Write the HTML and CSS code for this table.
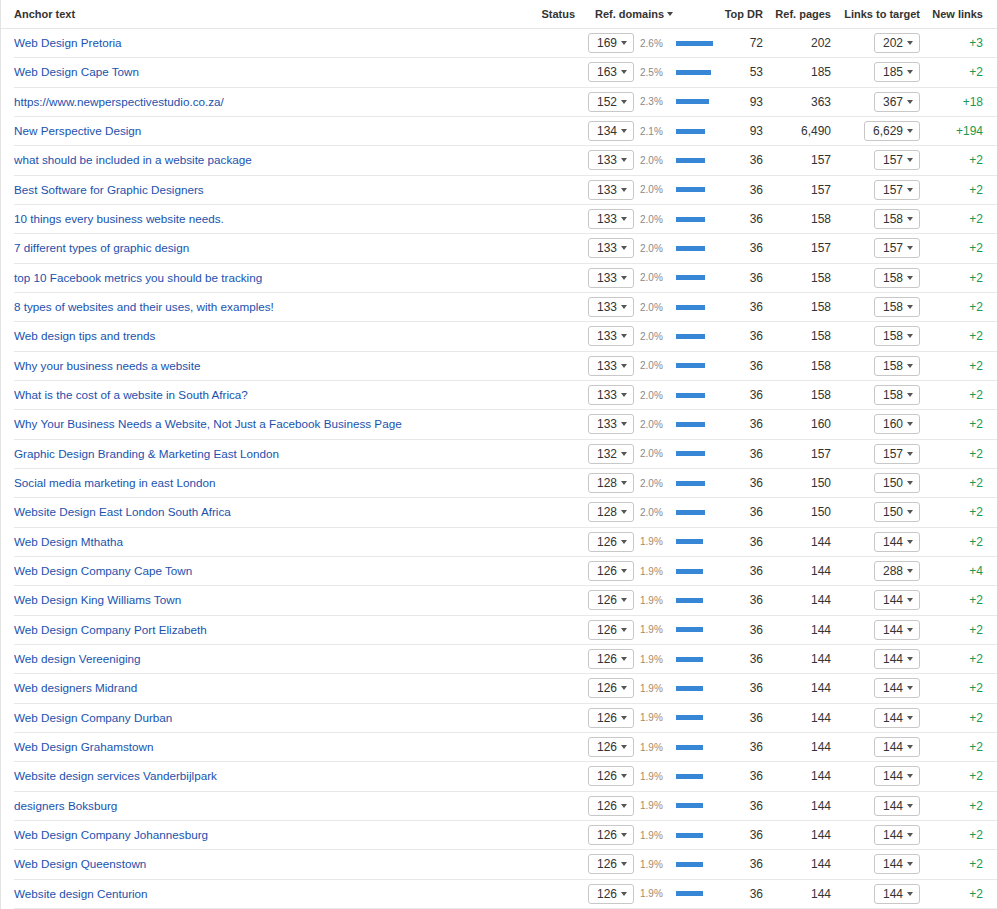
FILE: index.html
```html
<!DOCTYPE html>
<html>
<head>
<meta charset="utf-8">
<link rel="stylesheet" href="styles.css">
</head>
<body>
<div class="table">
  <div class="head">
    <div class="h-anchor">Anchor text</div>
    <div class="h-status">Status</div>
    <div class="h-refdom">Ref. domains <i class="caret"></i></div>
    <div class="h-num">Top DR</div>
    <div class="h-num">Ref. pages</div>
    <div class="h-num">Links to target</div>
    <div class="h-new">New links</div>
  </div>

  <div class="row"><div class="c-anchor"><a class="link" href="#">Web Design Pretoria</a></div><div></div><div class="c-refdom"><span class="dd">169<i class="caret"></i></span><span class="pct">2.6%</span><span class="bar" style="width:37px"></span></div><div class="c-num">72</div><div class="c-num">202</div><div class="c-links"><span class="dd">202<i class="caret"></i></span></div><div class="c-new">+3</div></div>
  <div class="row"><div class="c-anchor"><a class="link" href="#">Web Design Cape Town</a></div><div></div><div class="c-refdom"><span class="dd">163<i class="caret"></i></span><span class="pct">2.5%</span><span class="bar" style="width:35px"></span></div><div class="c-num">53</div><div class="c-num">185</div><div class="c-links"><span class="dd">185<i class="caret"></i></span></div><div class="c-new">+2</div></div>
  <div class="row"><div class="c-anchor"><a class="link" href="#">https://www.newperspectivestudio.co.za/</a></div><div></div><div class="c-refdom"><span class="dd">152<i class="caret"></i></span><span class="pct">2.3%</span><span class="bar" style="width:33px"></span></div><div class="c-num">93</div><div class="c-num">363</div><div class="c-links"><span class="dd">367<i class="caret"></i></span></div><div class="c-new">+18</div></div>
  <div class="row"><div class="c-anchor"><a class="link" href="#">New Perspective Design</a></div><div></div><div class="c-refdom"><span class="dd">134<i class="caret"></i></span><span class="pct">2.1%</span><span class="bar" style="width:29px"></span></div><div class="c-num">93</div><div class="c-num">6,490</div><div class="c-links"><span class="dd">6,629<i class="caret"></i></span></div><div class="c-new">+194</div></div>
  <div class="row"><div class="c-anchor"><a class="link" href="#">what should be included in a website package</a></div><div></div><div class="c-refdom"><span class="dd">133<i class="caret"></i></span><span class="pct">2.0%</span><span class="bar" style="width:29px"></span></div><div class="c-num">36</div><div class="c-num">157</div><div class="c-links"><span class="dd">157<i class="caret"></i></span></div><div class="c-new">+2</div></div>
  <div class="row"><div class="c-anchor"><a class="link" href="#">Best Software for Graphic Designers</a></div><div></div><div class="c-refdom"><span class="dd">133<i class="caret"></i></span><span class="pct">2.0%</span><span class="bar" style="width:29px"></span></div><div class="c-num">36</div><div class="c-num">157</div><div class="c-links"><span class="dd">157<i class="caret"></i></span></div><div class="c-new">+2</div></div>
  <div class="row"><div class="c-anchor"><a class="link" href="#">10 things every business website needs.</a></div><div></div><div class="c-refdom"><span class="dd">133<i class="caret"></i></span><span class="pct">2.0%</span><span class="bar" style="width:29px"></span></div><div class="c-num">36</div><div class="c-num">158</div><div class="c-links"><span class="dd">158<i class="caret"></i></span></div><div class="c-new">+2</div></div>
  <div class="row"><div class="c-anchor"><a class="link" href="#">7 different types of graphic design</a></div><div></div><div class="c-refdom"><span class="dd">133<i class="caret"></i></span><span class="pct">2.0%</span><span class="bar" style="width:29px"></span></div><div class="c-num">36</div><div class="c-num">157</div><div class="c-links"><span class="dd">157<i class="caret"></i></span></div><div class="c-new">+2</div></div>
  <div class="row"><div class="c-anchor"><a class="link" href="#">top 10 Facebook metrics you should be tracking</a></div><div></div><div class="c-refdom"><span class="dd">133<i class="caret"></i></span><span class="pct">2.0%</span><span class="bar" style="width:29px"></span></div><div class="c-num">36</div><div class="c-num">158</div><div class="c-links"><span class="dd">158<i class="caret"></i></span></div><div class="c-new">+2</div></div>
  <div class="row"><div class="c-anchor"><a class="link" href="#">8 types of websites and their uses, with examples!</a></div><div></div><div class="c-refdom"><span class="dd">133<i class="caret"></i></span><span class="pct">2.0%</span><span class="bar" style="width:29px"></span></div><div class="c-num">36</div><div class="c-num">158</div><div class="c-links"><span class="dd">158<i class="caret"></i></span></div><div class="c-new">+2</div></div>
  <div class="row"><div class="c-anchor"><a class="link" href="#">Web design tips and trends</a></div><div></div><div class="c-refdom"><span class="dd">133<i class="caret"></i></span><span class="pct">2.0%</span><span class="bar" style="width:29px"></span></div><div class="c-num">36</div><div class="c-num">158</div><div class="c-links"><span class="dd">158<i class="caret"></i></span></div><div class="c-new">+2</div></div>
  <div class="row"><div class="c-anchor"><a class="link" href="#">Why your business needs a website</a></div><div></div><div class="c-refdom"><span class="dd">133<i class="caret"></i></span><span class="pct">2.0%</span><span class="bar" style="width:29px"></span></div><div class="c-num">36</div><div class="c-num">158</div><div class="c-links"><span class="dd">158<i class="caret"></i></span></div><div class="c-new">+2</div></div>
  <div class="row"><div class="c-anchor"><a class="link" href="#">What is the cost of a website in South Africa?</a></div><div></div><div class="c-refdom"><span class="dd">133<i class="caret"></i></span><span class="pct">2.0%</span><span class="bar" style="width:29px"></span></div><div class="c-num">36</div><div class="c-num">158</div><div class="c-links"><span class="dd">158<i class="caret"></i></span></div><div class="c-new">+2</div></div>
  <div class="row"><div class="c-anchor"><a class="link" href="#">Why Your Business Needs a Website, Not Just a Facebook Business Page</a></div><div></div><div class="c-refdom"><span class="dd">133<i class="caret"></i></span><span class="pct">2.0%</span><span class="bar" style="width:29px"></span></div><div class="c-num">36</div><div class="c-num">160</div><div class="c-links"><span class="dd">160<i class="caret"></i></span></div><div class="c-new">+2</div></div>
  <div class="row"><div class="c-anchor"><a class="link" href="#">Graphic Design Branding &amp; Marketing East London</a></div><div></div><div class="c-refdom"><span class="dd">132<i class="caret"></i></span><span class="pct">2.0%</span><span class="bar" style="width:29px"></span></div><div class="c-num">36</div><div class="c-num">157</div><div class="c-links"><span class="dd">157<i class="caret"></i></span></div><div class="c-new">+2</div></div>
  <div class="row"><div class="c-anchor"><a class="link" href="#">Social media marketing in east London</a></div><div></div><div class="c-refdom"><span class="dd">128<i class="caret"></i></span><span class="pct">2.0%</span><span class="bar" style="width:29px"></span></div><div class="c-num">36</div><div class="c-num">150</div><div class="c-links"><span class="dd">150<i class="caret"></i></span></div><div class="c-new">+2</div></div>
  <div class="row"><div class="c-anchor"><a class="link" href="#">Website Design East London South Africa</a></div><div></div><div class="c-refdom"><span class="dd">128<i class="caret"></i></span><span class="pct">2.0%</span><span class="bar" style="width:29px"></span></div><div class="c-num">36</div><div class="c-num">150</div><div class="c-links"><span class="dd">150<i class="caret"></i></span></div><div class="c-new">+2</div></div>
  <div class="row"><div class="c-anchor"><a class="link" href="#">Web Design Mthatha</a></div><div></div><div class="c-refdom"><span class="dd">126<i class="caret"></i></span><span class="pct pct-low">1.9%</span><span class="bar" style="width:27px"></span></div><div class="c-num">36</div><div class="c-num">144</div><div class="c-links"><span class="dd">144<i class="caret"></i></span></div><div class="c-new">+2</div></div>
  <div class="row"><div class="c-anchor"><a class="link" href="#">Web Design Company Cape Town</a></div><div></div><div class="c-refdom"><span class="dd">126<i class="caret"></i></span><span class="pct pct-low">1.9%</span><span class="bar" style="width:27px"></span></div><div class="c-num">36</div><div class="c-num">144</div><div class="c-links"><span class="dd">288<i class="caret"></i></span></div><div class="c-new">+4</div></div>
  <div class="row"><div class="c-anchor"><a class="link" href="#">Web Design King Williams Town</a></div><div></div><div class="c-refdom"><span class="dd">126<i class="caret"></i></span><span class="pct pct-low">1.9%</span><span class="bar" style="width:27px"></span></div><div class="c-num">36</div><div class="c-num">144</div><div class="c-links"><span class="dd">144<i class="caret"></i></span></div><div class="c-new">+2</div></div>
  <div class="row"><div class="c-anchor"><a class="link" href="#">Web Design Company Port Elizabeth</a></div><div></div><div class="c-refdom"><span class="dd">126<i class="caret"></i></span><span class="pct pct-low">1.9%</span><span class="bar" style="width:27px"></span></div><div class="c-num">36</div><div class="c-num">144</div><div class="c-links"><span class="dd">144<i class="caret"></i></span></div><div class="c-new">+2</div></div>
  <div class="row"><div class="c-anchor"><a class="link" href="#">Web design Vereeniging</a></div><div></div><div class="c-refdom"><span class="dd">126<i class="caret"></i></span><span class="pct pct-low">1.9%</span><span class="bar" style="width:27px"></span></div><div class="c-num">36</div><div class="c-num">144</div><div class="c-links"><span class="dd">144<i class="caret"></i></span></div><div class="c-new">+2</div></div>
  <div class="row"><div class="c-anchor"><a class="link" href="#">Web designers Midrand</a></div><div></div><div class="c-refdom"><span class="dd">126<i class="caret"></i></span><span class="pct pct-low">1.9%</span><span class="bar" style="width:27px"></span></div><div class="c-num">36</div><div class="c-num">144</div><div class="c-links"><span class="dd">144<i class="caret"></i></span></div><div class="c-new">+2</div></div>
  <div class="row"><div class="c-anchor"><a class="link" href="#">Web Design Company Durban</a></div><div></div><div class="c-refdom"><span class="dd">126<i class="caret"></i></span><span class="pct pct-low">1.9%</span><span class="bar" style="width:27px"></span></div><div class="c-num">36</div><div class="c-num">144</div><div class="c-links"><span class="dd">144<i class="caret"></i></span></div><div class="c-new">+2</div></div>
  <div class="row"><div class="c-anchor"><a class="link" href="#">Web Design Grahamstown</a></div><div></div><div class="c-refdom"><span class="dd">126<i class="caret"></i></span><span class="pct pct-low">1.9%</span><span class="bar" style="width:27px"></span></div><div class="c-num">36</div><div class="c-num">144</div><div class="c-links"><span class="dd">144<i class="caret"></i></span></div><div class="c-new">+2</div></div>
  <div class="row"><div class="c-anchor"><a class="link" href="#">Website design services Vanderbijlpark</a></div><div></div><div class="c-refdom"><span class="dd">126<i class="caret"></i></span><span class="pct pct-low">1.9%</span><span class="bar" style="width:27px"></span></div><div class="c-num">36</div><div class="c-num">144</div><div class="c-links"><span class="dd">144<i class="caret"></i></span></div><div class="c-new">+2</div></div>
  <div class="row"><div class="c-anchor"><a class="link" href="#">designers Boksburg</a></div><div></div><div class="c-refdom"><span class="dd">126<i class="caret"></i></span><span class="pct pct-low">1.9%</span><span class="bar" style="width:27px"></span></div><div class="c-num">36</div><div class="c-num">144</div><div class="c-links"><span class="dd">144<i class="caret"></i></span></div><div class="c-new">+2</div></div>
  <div class="row"><div class="c-anchor"><a class="link" href="#">Web Design Company Johannesburg</a></div><div></div><div class="c-refdom"><span class="dd">126<i class="caret"></i></span><span class="pct pct-low">1.9%</span><span class="bar" style="width:27px"></span></div><div class="c-num">36</div><div class="c-num">144</div><div class="c-links"><span class="dd">144<i class="caret"></i></span></div><div class="c-new">+2</div></div>
  <div class="row"><div class="c-anchor"><a class="link" href="#">Web Design Queenstown</a></div><div></div><div class="c-refdom"><span class="dd">126<i class="caret"></i></span><span class="pct pct-low">1.9%</span><span class="bar" style="width:27px"></span></div><div class="c-num">36</div><div class="c-num">144</div><div class="c-links"><span class="dd">144<i class="caret"></i></span></div><div class="c-new">+2</div></div>
  <div class="row"><div class="c-anchor"><a class="link" href="#">Website design Centurion</a></div><div></div><div class="c-refdom"><span class="dd">126<i class="caret"></i></span><span class="pct pct-low">1.9%</span><span class="bar" style="width:27px"></span></div><div class="c-num">36</div><div class="c-num">144</div><div class="c-links"><span class="dd">144<i class="caret"></i></span></div><div class="c-new">+2</div></div>
</div>
</body>
</html>
```

FILE: styles.css
```css
html, body {
  margin: 0;
  padding: 0;
  background: #fff;
}
body {
  font-family: "Liberation Sans", Arial, sans-serif;
  font-size: 12px;
  color: #333;
  overflow: hidden;
}
.table {
  border-left: 1px solid #e3e3e3;
  height: 909px;
  box-sizing: border-box;
}
.head, .row {
  display: grid;
  grid-template-columns: 521px 48px 145px 43px 68px 89px 69px;
  align-items: center;
  box-sizing: border-box;
}
.head {
  height: 29px;
  padding-left: 13px;
  border-bottom: 1px solid #e6e6e6;
  font-size: 11px;
  font-weight: bold;
  color: #333;
  white-space: nowrap;
}
.row {
  height: 29.33px;
  margin-left: 13px;
  border-bottom: 1px solid #e8e8e8;
}
.h-status, .h-num, .h-new {
  text-align: right;
  padding-right: 8px;
  direction: rtl;
}
.h-new { padding-right: 14px; }
.h-refdom {
  padding-left: 12px;
  display: flex;
  align-items: center;
  gap: 3px;
}
.h-refdom .caret {
  border-top-width: 4px;
  border-left-width: 3.5px;
  border-right-width: 3.5px;
  border-top-color: #444;
}
.c-anchor {
  white-space: nowrap;
  overflow: hidden;
}
.link {
  color: #1a52ae;
  text-decoration: none;
  font-size: 11.7px;
}
.c-refdom {
  display: flex;
  align-items: center;
  padding-left: 5px;
}
.dd {
  display: inline-flex;
  align-items: center;
  gap: 4px;
  height: 20px;
  box-sizing: border-box;
  border: 1px solid #c8c8c8;
  border-radius: 3px;
  padding: 0 6px 0 8px;
  color: #333;
  background: #fff;
}
.caret {
  display: inline-block;
  width: 0;
  height: 0;
  border-top: 4px solid #555;
  border-left: 3.5px solid transparent;
  border-right: 3.5px solid transparent;
}
.pct {
  font-size: 10px;
  color: #8a8a8a;
  margin-left: 6px;
  width: 36px;
}
.pct-low {
  color: #a88b68;
}
.bar {
  display: block;
  height: 5px;
  background: #3887d7;
}
.c-num {
  text-align: right;
  padding-right: 8px;
}
.c-links {
  display: flex;
  justify-content: flex-end;
  padding-right: 8px;
}
.c-new {
  text-align: right;
  padding-right: 14px;
  color: #1b9a4e;
}
```
